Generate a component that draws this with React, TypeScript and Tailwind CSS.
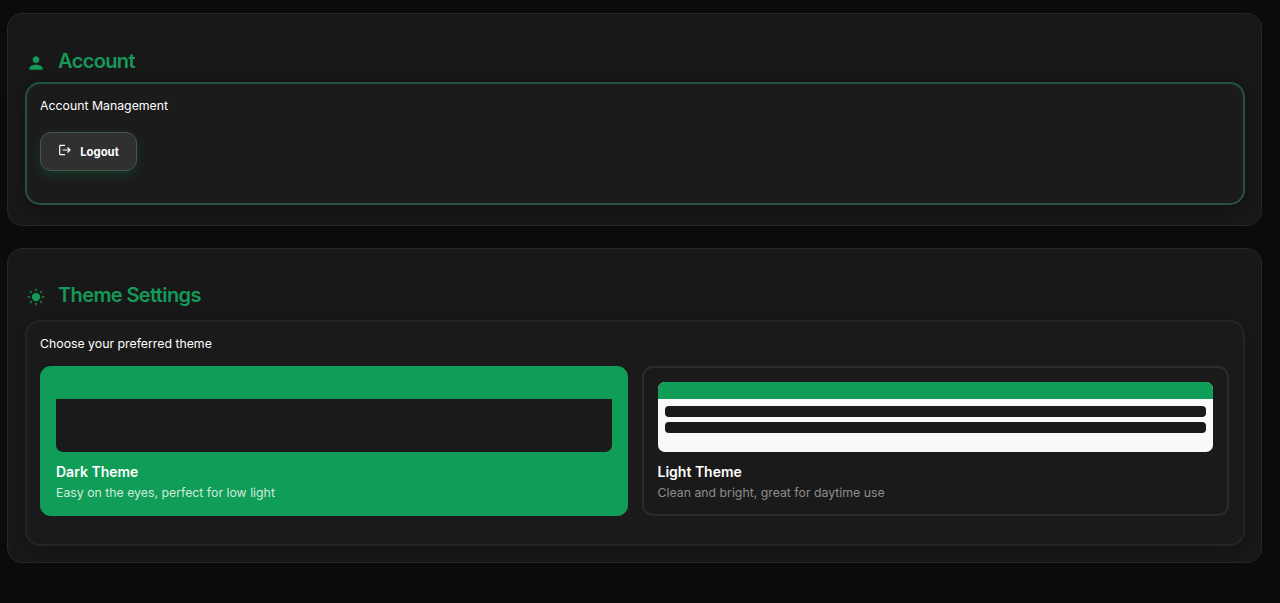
import type { ReactNode } from 'react';
import { MdPerson, MdLogout } from 'react-icons/md';

function SunIcon() {
  return (
    <svg viewBox="0 0 24 24" className="size-[18px]" fill="currentColor">
      <circle cx="12" cy="12" r="5.500" />
      <path d="M10.700 3.800L12 .5l1.300 3.300zM10.700 20.200L12 23.500l1.300-3.300zM3.800 10.700L.5 12l3.300 1.300zM20.200 10.700l3.300 1.300-3.300 1.300zM5.300 7.100L3.500 3.500l3.600 1.800zM18.700 7.100l1.800-3.600-3.600 1.800zM5.300 16.900l-1.800 3.600 3.600-1.800zM18.700 16.900l1.800 3.600-3.600-1.800z" stroke="currentColor" strokeWidth=".3" />
    </svg>
  );
}

type SectionProps = { title: string; icon: ReactNode; className: string; children: ReactNode };

function Section({ title, icon, className, children }: SectionProps) {
  return (
    <section className={`rounded-[15px] border border-[#272727] bg-[#181818] pr-[16px] pl-[17px] ${className}`}>
      <h2 className="flex h-[26px] items-center text-[20px] font-semibold tracking-[-0.620px] text-[#159958]">
        <span className="mt-[3px] mr-[12px] ml-px flex w-[20px] justify-center">{icon}</span>
        {title}
      </h2>
      {children}
    </section>
  );
}

type ThemeCardProps = { name: string; description: string; selected?: boolean };

function ThemeCard({ name, description, selected = false }: ThemeCardProps) {
  return (
    <div
      className={`h-[150px] rounded-[11px] border-2 p-[14px] ${
        selected ? 'border-[#0f9d58] bg-[#0f9d58]' : 'border-[#2c2c2c] bg-[#1a1a1a]'
      }`}
    >
      <div className={`h-[70px] overflow-hidden rounded-b-[7px] ${selected ? 'bg-[#1a1a1a]' : 'rounded-t-[7px] bg-[#f8f9fa]'}`}>
        <div className="h-[17px] bg-[#0f9d58]" />
        <div className="flex flex-col gap-[5px] p-[7px]">
          <div className="h-[11px] rounded-[4px] bg-[#1a1a1a]" />
          <div className="h-[11px] rounded-[4px] bg-[#1a1a1a]" />
        </div>
      </div>
      <div className="mt-[11px] text-[14px] leading-[18px] font-semibold text-white">{name}</div>
      <div className={`mt-[3px] text-[12.300px] leading-[18px] ${selected ? 'text-[#cfecdd]' : 'text-[#8d8d8d]'}`}>
        {description}
      </div>
    </div>
  );
}

export default function App() {
  return (
    <main className="h-[603px] overflow-hidden bg-[#0b0b0b] pt-[13px] pr-[18px] pl-[7px] font-['Inter',sans-serif] text-white">
      <Section title="Account" icon={<MdPerson className="size-[22px]" />} className="h-[213px] pt-[34px]">
        <div className="mt-[8px] h-[123px] rounded-[15px] border-2 border-[#24543b] bg-[#1b1b1b] px-[13px] pt-[12px] shadow-[0_4px_18px_rgba(0,0,0,0.35)]">
          <div className="text-[12.300px] leading-[20px]">Account Management</div>
          <button className="mt-[16px] flex h-[39px] w-[97px] items-center justify-center rounded-[11px] border border-[#48594f] bg-[#303030] text-[11.300px] font-bold shadow-[0_4px_12px_rgba(15,157,88,0.22)]">
            <MdLogout className="mr-[8px] mb-[3px] size-[14px]" />
            <span className="mt-[2px]">Logout</span>
          </button>
        </div>
      </Section>
      <Section title="Theme Settings" icon={<SunIcon />} className="mt-[22px] h-[315px] pt-[33px]">
        <div className="mt-[12px] h-[226px] rounded-[15px] border-2 border-[#252525] bg-[#1a1a1a] pr-[14px] pl-[13px] pt-[12px] shadow-[0_4px_18px_rgba(0,0,0,0.2)]">
          <div className="text-[12.300px] leading-[20px]">Choose your preferred theme</div>
          <div className="mt-[12px] grid grid-cols-2 gap-[14px]">
            <ThemeCard name="Dark Theme" description="Easy on the eyes, perfect for low light" selected />
            <ThemeCard name="Light Theme" description="Clean and bright, great for daytime use" />
          </div>
        </div>
      </Section>
    </main>
  );
}
